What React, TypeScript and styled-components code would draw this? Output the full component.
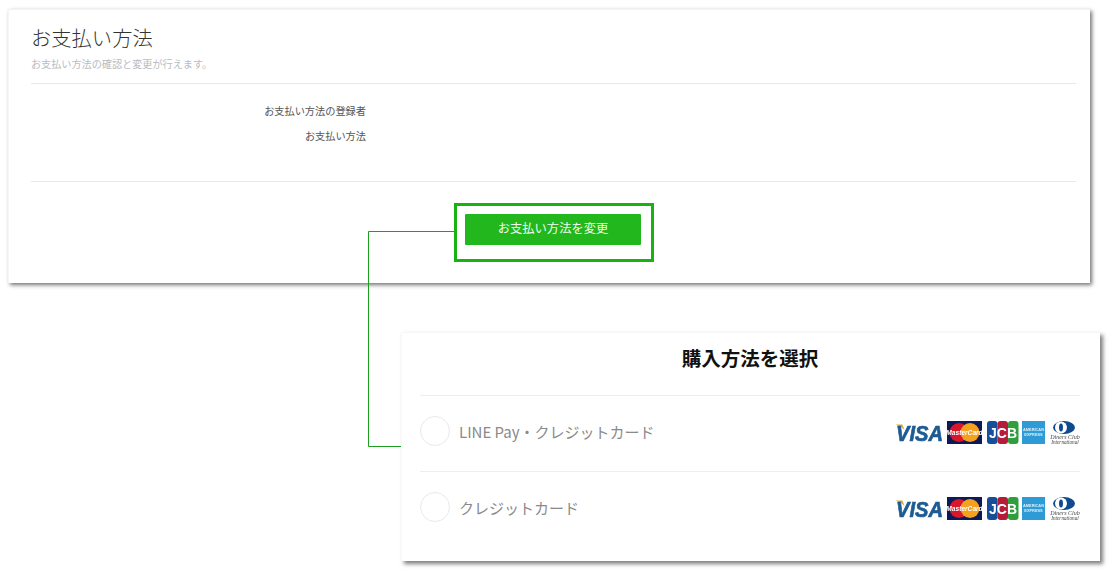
import React from "react";
import styled, { createGlobalStyle } from "styled-components";

const Global = createGlobalStyle`
  html, body { margin: 0; padding: 0; background: #fff; }
  body { font-family: "Noto Sans CJK JP", "Liberation Sans", sans-serif; }
`;

const Page = styled.div`
  position: relative;
  width: 1114px;
  height: 576px;
  overflow: hidden;
  box-sizing: border-box;
  padding: 9px 0 0 8px;
`;

const TopCard = styled.section`
  box-sizing: border-box;
  width: 1082px;
  height: 274px;
  padding: 14px 14px 0 22px;
  background: #fff;
  border-top: 1px solid #f3f3f3;
  border-left: 1px solid #f5f5f5;
  box-shadow: 2px 2px 4px rgba(0, 0, 0, 0.55);
`;

const Title = styled.h1`
  margin: 0;
  font-size: 20.3px;
  line-height: 26px;
  font-weight: 300;
  color: #333;
`;

const Subtitle = styled.p`
  margin: 6px 0 0;
  font-size: 10.15px;
  line-height: 16px;
  color: #b9bcbf;
`;

const Details = styled.div`
  margin-top: 11px;
  height: 99px;
  box-sizing: border-box;
  padding-top: 19px;
  border-top: 1px solid #e8e8e8;
  border-bottom: 1px solid #e8e8e8;
  display: flex;
  flex-direction: column;
  gap: 9px;
`;

const Label = styled.div`
  width: 335px;
  text-align: right;
  font-size: 10.2px;
  line-height: 16px;
  color: #555;
`;

const ButtonRow = styled.div`
  display: flex;
  justify-content: center;
  margin-top: 21px;
  padding-left: 1px;
`;

const Highlight = styled.div`
  box-sizing: border-box;
  width: 200px;
  height: 59px;
  border: 3px solid #18b312;
  padding: 8px;
`;

const ChangeButton = styled.button`
  display: block;
  width: 176px;
  height: 31px;
  margin: 0;
  padding: 0 0 4px;
  border: 0;
  border-radius: 1px;
  background: #22b81d;
  color: #f2fbf1;
  font: 12.3px "Noto Sans CJK JP", sans-serif;
`;

const BottomCard = styled.section`
  box-sizing: border-box;
  width: 699px;
  height: 229px;
  margin: 49px 0 0 393px;
  padding: 0 20px 0 18px;
  background: #fff;
  border-top: 1px solid #f7f7f7;
  border-left: 1px solid #f8f8f8;
  box-shadow: 3px 3px 4px rgba(0, 0, 0, 0.5);
`;

const BottomTitle = styled.h2`
  margin: 0;
  height: 62px;
  box-sizing: border-box;
  padding-bottom: 14px;
  display: flex;
  align-items: center;
  justify-content: center;
  font-size: 19.5px;
  font-weight: 700;
  color: #111;
`;

const Option = styled.div`
  display: flex;
  align-items: center;
  height: 76px;
  box-sizing: border-box;
  padding-bottom: 5px;
  border-top: 1px solid #eeeeee;
`;

const Radio = styled.span`
  box-sizing: border-box;
  flex: none;
  width: 30px;
  height: 30px;
  border: 1px solid #e9e9e9;
  border-radius: 50%;
  margin-right: 9px;
`;

const OptionText = styled.span`
  flex: 1;
  font-size: 15px;
  color: #8a8a8a;
`;

const Connector = styled.svg`
  position: absolute;
  left: 360px;
  top: 225px;
`;

const Logos = styled.svg`
  flex: none;
  display: block;
  margin-top: 2px;
  filter: blur(0.35px);
`;

function CardLogos() {
  return (
    <Logos width={186} height={26} viewBox="0 0 186 26" aria-hidden="true">
      {/* VISA */}
      <path d="M1.5 5.5h7l2 5.5C7.5 8.2 4.5 6.6 1.5 5.5z" fill="#e3a92c" />
      <text x="2" y="22" fontFamily="Liberation Sans, sans-serif" fontSize="22" fontStyle="italic" fontWeight="700" fill="#1d5b93" stroke="#1d5b93" strokeWidth="0.7" textLength="47" lengthAdjust="spacingAndGlyphs">VISA</text>
      {/* MasterCard */}
      <rect x="53" y="2" width="35" height="23" fill="#0c1a57" />
      <circle cx="65" cy="13.5" r="9.4" fill="#d8172a" />
      <circle cx="76" cy="13.5" r="9.4" fill="#f4a11f" />
      <text x="70.5" y="15.5" textAnchor="middle" fontFamily="Liberation Sans, sans-serif" fontSize="6.6" fontStyle="italic" fontWeight="700" fill="#fff">MasterCard</text>
      {/* JCB */}
      <rect x="93" y="2" width="10.5" height="23" rx="3" fill="#174e9a" />
      <rect x="103.5" y="2" width="10.5" height="23" rx="3" fill="#b41c3a" />
      <rect x="114" y="2" width="10.5" height="23" rx="3" fill="#2f9e3f" />
      <text x="109" y="18.5" textAnchor="middle" fontFamily="Liberation Sans, sans-serif" fontSize="14" fontWeight="700" fill="#fff" textLength="28" lengthAdjust="spacingAndGlyphs">JCB</text>
      {/* American Express */}
      <rect x="128" y="2" width="23" height="23" fill="#2e9bd6" />
      <text x="139.5" y="11.5" textAnchor="middle" fontFamily="Liberation Sans, sans-serif" fontSize="3.9" fontWeight="700" fill="#d9f0fb">AMERICAN</text>
      <text x="139.5" y="16.5" textAnchor="middle" fontFamily="Liberation Sans, sans-serif" fontSize="3.9" fontWeight="700" fill="#d9f0fb">EXPRESS</text>
      {/* Diners Club */}
      <ellipse cx="170" cy="8.5" rx="11" ry="6.5" fill="#0f4a8f" />
      <circle cx="167" cy="8.5" r="6" fill="#fff" />
      <ellipse cx="167" cy="8.5" rx="2" ry="4" fill="#0f4a8f" />
      <text x="171" y="19.5" textAnchor="middle" fontFamily="Liberation Serif, serif" fontSize="6" fontStyle="italic" fill="#444">Diners Club</text>
      <text x="171" y="24.5" textAnchor="middle" fontFamily="Liberation Serif, serif" fontSize="5.2" fontStyle="italic" fill="#444">International</text>
    </Logos>
  );
}

export default function App() {
  return (
    <Page>
      <Global />
      <TopCard>
        <Title>お支払い方法</Title>
        <Subtitle>お支払い方法の確認と変更が行えます。</Subtitle>
        <Details>
          <Label>お支払い方法の登録者</Label>
          <Label>お支払い方法</Label>
        </Details>
        <ButtonRow>
          <Highlight>
            <ChangeButton>お支払い方法を変更</ChangeButton>
          </Highlight>
        </ButtonRow>
      </TopCard>
      <BottomCard>
        <BottomTitle>購入方法を選択</BottomTitle>
        <Option>
          <Radio />
          <OptionText>LINE Pay・クレジットカード</OptionText>
          <CardLogos />
        </Option>
        <Option>
          <Radio />
          <OptionText>クレジットカード</OptionText>
          <CardLogos />
        </Option>
      </BottomCard>
      <Connector width={100} height={225} viewBox="0 0 100 225" aria-hidden="true">
        <path d="M94 6.5H8.5V221.5H41" fill="none" stroke="#1e9e1e" strokeWidth="1" />
      </Connector>
    </Page>
  );
}
